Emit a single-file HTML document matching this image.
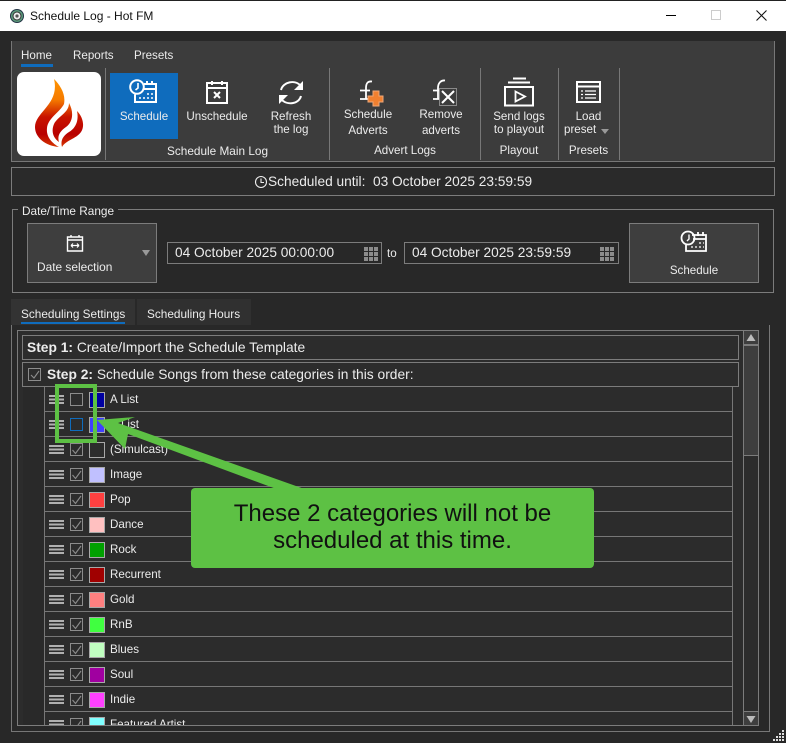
<!DOCTYPE html>
<html><head><meta charset="utf-8"><style>
html,body{margin:0;padding:0;background:#282828}
#w{position:relative;width:786px;height:743px;overflow:hidden;background:#282828;font-family:"Liberation Sans",sans-serif;font-size:11.6px;color:#ececec}
#w div,#w svg{position:absolute;box-sizing:border-box}
.t{white-space:nowrap;line-height:14px}
.c{text-align:center}
.b{border:1px solid #7c7c7c}
.sep{width:1px;background:#777;top:68px;height:92px}
.row{left:44px;width:689px;height:25px;border-left:1px solid #777;border-right:1px solid #777;border-bottom:1px solid #777}
.h{left:4px;top:8px;width:15px;height:9px;background:linear-gradient(#b0b0b0 0 2px,transparent 2px 3.5px,#b0b0b0 3.5px 5.5px,transparent 5.5px 7px,#b0b0b0 7px 9px)}
.cb{left:25px;top:6px;width:13px;height:13px;border:1px solid #8c8c8c}
.sw{left:44px;top:5px;width:16px;height:16px;border:1px solid #a8a8a8}
.n{left:65px;top:6px;font-size:11.6px;white-space:nowrap;line-height:14px}
</style></head><body><div id="w">

<div style="left:0;top:1px;width:786px;height:30px;background:#fff"></div>
<div style="left:0;top:0;width:786px;height:1px;background:#222"></div>
<svg style="left:9px;top:8px" width="16" height="16" viewBox="0 0 16 16"><circle cx="8" cy="8" r="7" fill="#234"/><circle cx="8" cy="8" r="6" fill="#5c9a7c"/><circle cx="8" cy="8" r="4" fill="#eee" stroke="#333"/><circle cx="8" cy="8" r="1.6" fill="#555"/></svg>
<div class="t" style="left:30px;top:9px;color:#111;font-size:12px">Schedule Log - Hot FM</div>
<div style="left:666px;top:15px;width:10px;height:1px;background:#000"></div>
<div style="left:711px;top:10px;width:10px;height:10px;border:1px solid #ccc"></div>
<svg style="left:756px;top:10px" width="11" height="11" viewBox="0 0 11 11"><path d="M.5.5l10 10M10.500.5l-10 10" stroke="#111" stroke-width="1.100" fill="none"/></svg>

<!-- ribbon -->
<div style="left:11px;top:41px;width:764px;height:121px;background:#3c3c3c;border-left:1px solid #777;border-right:1px solid #777;border-bottom:1px solid #777"></div>
<div class="t" style="left:21px;top:49px">Home</div>
<div style="left:21px;top:64px;width:32px;height:3px;background:#0f6cbd"></div>
<div class="t" style="left:73px;top:49px">Reports</div>
<div class="t" style="left:134px;top:49px">Presets</div>
<div style="left:17px;top:72px;width:84px;height:84px;background:#fff;border-radius:7px"></div>
<svg style="left:0;top:0" width="110" height="160" viewBox="0 0 110 160"><defs><linearGradient id="f" gradientUnits="userSpaceOnUse" x1="0" y1="79" x2="0" y2="148"><stop offset="0" stop-color="#ff9400"/><stop offset=".3" stop-color="#f57a00"/><stop offset=".55" stop-color="#c81400"/><stop offset=".8" stop-color="#b80000"/><stop offset="1" stop-color="#d83a00"/></linearGradient></defs>
<path fill="url(#f)" d="M54 79C60 85 66 94 64 104C60 112 48 118 47 128C46 137 52 143 59 147C46 146 35 138 35 127C35 112 60 104 54 79Z"/>
<path fill="url(#f)" d="M69 103C74 112 73 122 66 127C60 131 57 136 59 142C53 138 51 131 54 124C58 116 69 113 69 103Z"/>
<path fill="url(#f)" d="M77 111C83 117 85 126 81 132C76 139 66 140 62 147C60 140 64 135 69 132C76 128 79 120 77 111Z"/></svg>
<div class="sep" style="left:105px"></div>
<div class="sep" style="left:329px"></div>
<div class="sep" style="left:480px"></div>
<div class="sep" style="left:558px"></div>
<div class="sep" style="left:619px"></div>
<div style="left:110px;top:73px;width:68px;height:66px;background:#0f6cbd"></div>

<svg style="left:0;top:0" width="786" height="165" viewBox="0 0 786 165" fill="none" stroke="#fff" stroke-width="2">
<!-- schedule -->
<path d="M144 84H156V102H135V94.500"/><path d="M147 81V85M152 81V85M144 89H156"/><circle cx="137" cy="87" r="6.800" stroke-width="2"/><path d="M138 83V88L135.500 90" stroke-width="1.600"/><path d="M139 98h2M143 98h2M147 98h2M151 98h2M147 94h2M151 94h2" stroke-width="1.600"/>
<!-- unschedule -->
<path d="M207 83H227V103H207Z"/><path d="M212 81V85M222 81V85M207 88H227"/><path d="M214 92L220 98M220 92L214 98" stroke-width="2"/>
<!-- refresh -->
<path d="M281 90C283 82 295 79 301 86" /><path d="M303 81V90H294Z" fill="#fff" stroke="none"/><path d="M301 96C299 104 287 106 281 99"/><path d="M279 104V95H288Z" fill="#fff" stroke="none"/>
<!-- advert add -->
<path d="M366 99V88C366 83 368 81 372 81.500M360 99H372M360 90.500H370" stroke-width="1.800"/><path d="M373 91h6v5h4v6h-4v4h-6v-4h-5v-6h5z" fill="#f08030" stroke="#f0a878" stroke-width="1"/>
<!-- remove advert -->
<path d="M438 99V88C438 83 441 80 445 80.500M433 99H440M433 90.500H440" stroke-width="1.800"/><path d="M439.500 88.500H456.500V105.500H439.500Z" fill="#3c3c3c" stroke="#8a8a8a" stroke-width="1"/><path d="M442 91L454 103M454 91L442 103"/>
<!-- playout -->
<path d="M513 78.500H526M508 82.500H530" stroke-width="2"/><path d="M505 87H533V105.500H505Z" stroke-width="2"/><path d="M515.500 91.500L525 96.500L515.500 101.500Z" stroke-width="1.800"/>
<!-- preset -->
<path d="M577 82H600V102H577Z" stroke-width="2"/><path d="M577 86.500H600" stroke-width="2"/><path d="M581 91h2M585 91h11M581 94.500h2M585 94.500h11M581 98h2M585 98h11" stroke-width="1.300"/>
<path d="M601 129h8l-4 5z" fill="#999" stroke="none"/>
</svg>

<div class="t c" style="left:110px;width:68px;top:110px">Schedule</div>
<div class="t c" style="left:181px;width:72px;top:110px">Unschedule</div>
<div class="t c" style="left:256px;width:70px;top:110px">Refresh</div>
<div class="t c" style="left:256px;width:70px;top:123px">the log</div>
<div class="t c" style="left:110px;width:215px;top:144px;font-size:11.800px">Schedule Main Log</div>
<div class="t c" style="left:333px;width:70px;top:108px">Schedule</div>
<div class="t c" style="left:333px;width:70px;top:124px">Adverts</div>
<div class="t c" style="left:406px;width:70px;top:108px">Remove</div>
<div class="t c" style="left:406px;width:70px;top:124px">adverts</div>
<div class="t c" style="left:333px;width:144px;top:144px">Advert Logs</div>
<div class="t c" style="left:484px;width:70px;top:110px">Send logs</div>
<div class="t c" style="left:484px;width:70px;top:123px">to playout</div>
<div class="t c" style="left:484px;width:70px;top:144px">Playout</div>
<div class="t c" style="left:560px;width:57px;top:110px">Load</div>
<div class="t" style="left:564px;top:123px">preset</div>
<div class="t c" style="left:560px;width:57px;top:144px">Presets</div>

<!-- status -->
<div class="b" style="left:11px;top:167px;width:764px;height:29px;background:#2a2a2a"></div>
<svg style="left:254px;top:175px" width="14" height="14" viewBox="0 0 14 14" fill="none" stroke="#eee" stroke-width="1.100"><circle cx="7" cy="7" r="5.500"/><path d="M7 3.500V7.500H10"/></svg>
<div class="t" style="left:268px;top:175px;font-size:13.700px">Scheduled until:&nbsp; 03 October 2025 23:59:59</div>

<!-- date group -->
<div class="b" style="left:12px;top:209px;width:762px;height:84px"></div>
<div class="t" style="left:18px;top:204px;background:#282828;padding:0 4px;font-size:11.800px">Date/Time Range</div>
<div class="b" style="left:27px;top:223px;width:130px;height:60px;background:#3e3e3e"></div>
<svg style="left:66px;top:234px" width="18" height="18" viewBox="0 0 18 18" fill="none" stroke="#fff" stroke-width="1.400"><path d="M1.500 3H16.500V17H1.500Z"/><path d="M1.500 6H16.500M5 1V3M13 1V3"/><path d="M5 11.500H13M5 11.500L7 9.500M5 11.500L7 13.500M13 11.500L11 9.500M13 11.500L11 13.500" stroke-width="1.200"/></svg>
<div class="t" style="left:37px;top:260px;font-size:11.900px">Date selection</div>
<svg style="left:141px;top:249px" width="10" height="8"><path d="M1 1h8l-4 6z" fill="#999"/></svg>
<div class="b" style="left:167px;top:242px;width:215px;height:22px"></div>
<div class="t" style="left:175px;top:246px;font-size:13.700px">04 October 2025 00:00:00</div>
<div style="left:364px;top:246px;width:15px;height:15px;background:repeating-linear-gradient(90deg,#8c8c8c 0 4px,#282828 4px 5px);"></div>
<div style="left:364px;top:246px;width:15px;height:15px;background:repeating-linear-gradient(0deg,transparent 0 4px,#282828 4px 5px);"></div>
<div class="t" style="left:387px;top:247px">to</div>
<div class="b" style="left:404px;top:242px;width:215px;height:22px"></div>
<div class="t" style="left:412px;top:246px;font-size:13.700px">04 October 2025 23:59:59</div>
<div style="left:600px;top:246px;width:15px;height:15px;background:repeating-linear-gradient(90deg,#8c8c8c 0 4px,#282828 4px 5px);"></div>
<div style="left:600px;top:246px;width:15px;height:15px;background:repeating-linear-gradient(0deg,transparent 0 4px,#282828 4px 5px);"></div>
<div class="b" style="left:629px;top:223px;width:130px;height:60px;background:#3e3e3e"></div>
<svg style="left:679px;top:230px" width="30" height="28" viewBox="0 0 30 28" fill="none" stroke="#fff" stroke-width="1.800"><path d="M13 5H27V21H7V15"/><path d="M19 2V6M24 2V6M14 9H27"/><circle cx="9" cy="8" r="6.500"/><path d="M10 4.500V9L8 11" stroke-width="1.400"/><path d="M12 17h2M16 17h2M20 17h2M24 17h1M20 13h2M24 13h1" stroke-width="1.300"/></svg>
<div class="t c" style="left:629px;width:130px;top:264px">Schedule</div>

<!-- tabs -->
<div style="left:11px;top:299px;width:124px;height:26px;background:#333"></div>
<div style="left:137px;top:299px;width:114px;height:26px;background:#303030"></div>
<div class="t" style="left:21px;top:307px;font-size:11.800px">Scheduling Settings</div>
<div style="left:21px;top:322px;width:104px;height:2px;background:#0f6cbd"></div>
<div class="t" style="left:147px;top:307px;font-size:11.800px">Scheduling Hours</div>

<!-- content frames -->
<div style="left:11px;top:325px;width:759px;height:407px;border:1px solid #777;border-top:0"></div>
<div class="b" style="left:17px;top:330px;width:742px;height:396px;overflow:hidden;background:#2c2c2c" id="in">
  <div style="left:5px;top:56px;width:21px;height:340px;background:#292929"></div>
</div>
<div class="b" style="left:22px;top:335px;width:717px;height:25px"></div>
<div class="t" style="left:27px;top:341px;font-size:13.800px"><b>Step 1:</b> Create/Import the Schedule Template</div>
<div class="b" style="left:22px;top:362px;width:717px;height:25px"></div>
<div class="cb" style="left:28px;top:368px"></div>
<svg style="left:30px;top:370px" width="10" height="10"><path d="M1 5l3 3 5-7" fill="none" stroke="#8c8c8c" stroke-width="1.100"/></svg>
<div class="t" style="left:47px;top:368px;font-size:13.800px"><b>Step 2:</b> Schedule Songs from these categories in this order:</div>

<!-- rows -->
<div style="left:0;top:387px;width:786px;height:338px;overflow:hidden">
<svg style="left:0;top:0" width="0" height="0"><defs><path id="k" d="M1.500 6l3 3.500 5.500-7.500" fill="none" stroke="#8c8c8c" stroke-width="1.100"/></defs></svg>
<div class="row" style="top:0"><div class="h"></div><div class="cb"></div><div class="sw" style="background:#0000a0"></div><div class="n">A List</div></div>
<div class="row" style="top:25px"><div class="h"></div><div class="cb" style="border-color:#0f6cbd"></div><div class="sw" style="background:#4040ff"></div><div class="n">B List</div></div>
<div class="row" style="top:50px"><div class="h"></div><div class="cb"><svg width="11" height="11"><use href="#k"/></svg></div><div class="sw"></div><div class="n">(Simulcast)</div></div>
<div class="row" style="top:75px"><div class="h"></div><div class="cb"><svg width="11" height="11"><use href="#k"/></svg></div><div class="sw" style="background:#c0c0ff"></div><div class="n">Image</div></div>
<div class="row" style="top:100px"><div class="h"></div><div class="cb"><svg width="11" height="11"><use href="#k"/></svg></div><div class="sw" style="background:#ff4040"></div><div class="n">Pop</div></div>
<div class="row" style="top:125px"><div class="h"></div><div class="cb"><svg width="11" height="11"><use href="#k"/></svg></div><div class="sw" style="background:#ffc0c0"></div><div class="n">Dance</div></div>
<div class="row" style="top:150px"><div class="h"></div><div class="cb"><svg width="11" height="11"><use href="#k"/></svg></div><div class="sw" style="background:#00a000"></div><div class="n">Rock</div></div>
<div class="row" style="top:175px"><div class="h"></div><div class="cb"><svg width="11" height="11"><use href="#k"/></svg></div><div class="sw" style="background:#a00000"></div><div class="n">Recurrent</div></div>
<div class="row" style="top:200px"><div class="h"></div><div class="cb"><svg width="11" height="11"><use href="#k"/></svg></div><div class="sw" style="background:#ff8080"></div><div class="n">Gold</div></div>
<div class="row" style="top:225px"><div class="h"></div><div class="cb"><svg width="11" height="11"><use href="#k"/></svg></div><div class="sw" style="background:#40ff40"></div><div class="n">RnB</div></div>
<div class="row" style="top:250px"><div class="h"></div><div class="cb"><svg width="11" height="11"><use href="#k"/></svg></div><div class="sw" style="background:#c0ffc0"></div><div class="n">Blues</div></div>
<div class="row" style="top:275px"><div class="h"></div><div class="cb"><svg width="11" height="11"><use href="#k"/></svg></div><div class="sw" style="background:#a000a0"></div><div class="n">Soul</div></div>
<div class="row" style="top:300px"><div class="h"></div><div class="cb"><svg width="11" height="11"><use href="#k"/></svg></div><div class="sw" style="background:#ff40ff"></div><div class="n">Indie</div></div>
<div class="row" style="top:325px"><div class="h"></div><div class="cb"><svg width="11" height="11"><use href="#k"/></svg></div><div class="sw" style="background:#80ffff"></div><div class="n">Featured Artist</div></div>
</div>

<!-- scrollbar -->
<div class="b" style="left:743px;top:330px;width:16px;height:396px"></div>
<div class="b" style="left:743px;top:330px;width:16px;height:126px;background:#3e3e3e"></div>
<div style="left:743px;top:344px;width:16px;height:2px;background:#7c7c7c"></div>
<svg style="left:746px;top:334px" width="10" height="8"><path d="M5 0l4.500 7H.5z" fill="#bbb"/></svg>
<div class="b" style="left:743px;top:711px;width:16px;height:15px;background:#3e3e3e"></div>
<svg style="left:746px;top:716px" width="10" height="8"><path d="M.5 0h9L5 7z" fill="#bbb"/></svg>

<!-- grip -->
<svg style="left:772px;top:729px" width="13" height="13" fill="#ddd"><path d="M10 1h2v2h-2zM7 4h2v2H7zM10 4h2v2h-2zM4 7h2v2H4zM7 7h2v2H7zM10 7h2v2h-2zM1 10h2v2H1zM4 10h2v2H4zM7 10h2v2H7zM10 10h2v2h-2z"/></svg>

<!-- annotation -->
<svg style="left:0;top:0" width="786" height="743" viewBox="0 0 786 743">
<rect x="57" y="386" width="38" height="55" fill="none" stroke="#5dc144" stroke-width="4"/>
<path d="M97 420L135 417L118 423L303 488.500H275L128 434L125 449Z" fill="#5dc144"/>
</svg>
<div style="left:191px;top:488px;width:403px;height:80px;background:#5dc144;border-radius:4px"></div>
<div class="c" style="left:191px;top:500px;width:403px;font-size:24px;line-height:27px;color:#111">These 2 categories will not be<br>scheduled at this time.</div>

</div></body></html>
